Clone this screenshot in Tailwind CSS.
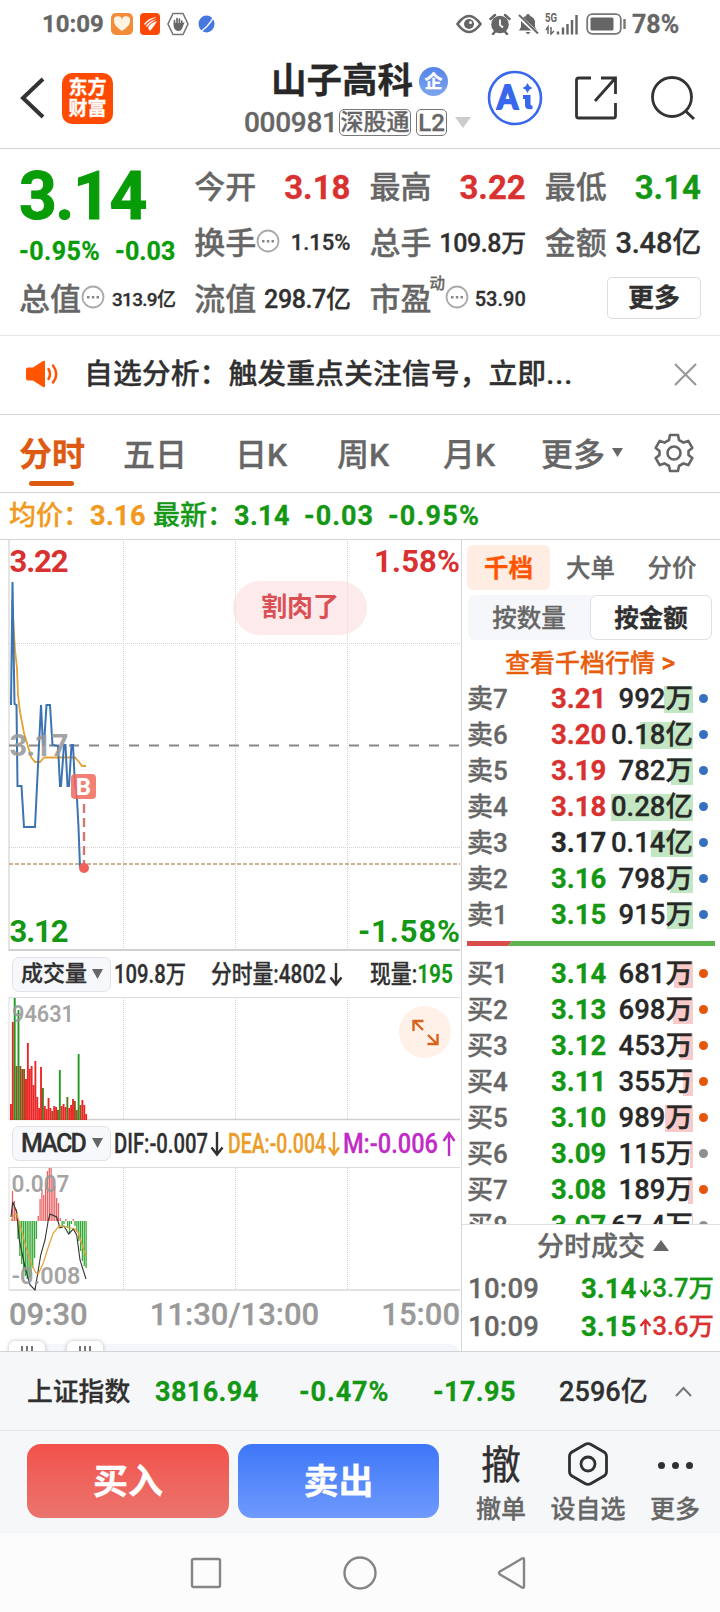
<!DOCTYPE html>
<html lang="zh-CN">
<head>
    <meta charset="UTF-8">
    <meta name="viewport" content="width=device-width, initial-scale=1.0">
    <title>山子高科 000981</title>
    <script src="https://cdn.jsdelivr.net/npm/@tailwindcss/browser@4"></script>
</head>
<body class="w-[720px] h-[1612px] overflow-hidden bg-white text-[#303030] font-['Roboto','Noto_Sans_CJK_SC',sans-serif] font-medium leading-none whitespace-nowrap [-webkit-text-stroke:0.3px]">

    <!-- Status bar -->
    <div class="h-12 flex items-center justify-between pl-[42px] pr-[38px] text-[#666]">
        <div class="flex items-center">
            <span class="w-[69px] text-[24px] font-bold">10:09</span>
            <svg class="w-[22px] h-[22px] mr-[7px]" viewBox="0 0 22 22"><rect width="22" height="22" rx="5" fill="#f28c38"/><path d="M11 18C5 14 3 11 3 8a4 4 0 0 1 8-1.500a4 4 0 0 1 8 1.500c0 3-2 6-8 10z" fill="#fff3e2"/></svg>
            <svg class="w-5 h-[22px] mr-[7px]" viewBox="0 0 20 22"><rect width="20" height="22" rx="4" fill="#fb4707"/><path d="M4 11Q8 5 17 4Q9 7 5 12zM6 13Q9 8 17 6Q11 9 7 14zM8 15Q10 10 17 8Q15 12 10 18z" fill="#fff"/></svg>
            <svg class="w-[22px] h-[24px] mr-[9px]" viewBox="0 0 22 24"><path d="M6 1.500h10l5 10.500-5 10.500H6L1 12z" fill="none" stroke="#777" stroke-width="1.600"/><path d="M7.500 12V8.500m2.500 4V6.500m2.400 6V7m2.400 6V9" stroke="#666" stroke-width="1.700" stroke-linecap="round"/><path d="M6.700 11h9l2-1-2.400 6q-1 3-4 3t-4.600-4z" fill="#666"/></svg>
            <svg class="w-[17px] h-[24px]" viewBox="0 0 17 24"><ellipse cx="8.500" cy="12" rx="8" ry="8.500" fill="#4678e0"/><path d="M0 21Q9 17 17 3" stroke="#fff" stroke-width="1.500" fill="none"/></svg>
        </div>
        <div class="flex items-center">
            <svg class="w-[26px] h-[20px] mr-[7px]" viewBox="0 0 26 20"><path d="M1.500 10Q13-6 24.500 10Q13 26 1.500 10z" fill="none" stroke="#666" stroke-width="2.600"/><circle cx="13" cy="10" r="5" fill="#666"/><circle cx="14.500" cy="8.500" r="1.500" fill="#fff"/></svg>
            <svg class="w-[22px] h-[22px] mr-[6px]" viewBox="0 0 22 22"><circle cx="11" cy="11.500" r="8.800" fill="#666"/><path d="M1.500 6L6 2M20.500 6L16 2M4 21l2.500-3M18 21l-2.500-3" stroke="#666" stroke-width="2.500" stroke-linecap="round"/><path d="M11 6.500V12l3 2.500" fill="none" stroke="#fff" stroke-width="1.800"/></svg>
            <svg class="w-[22px] h-[22px] mr-[6px]" viewBox="0 0 22 22"><path d="M11 1a2 2 0 0 1 2 2q5 1.500 5 7v4l2 3.500H2L4 14v-4q0-5.500 5-7a2 2 0 0 1 2-2zM8.500 19h5l-2.500 2.500z" fill="#666"/><path d="M1 2.500L21 21" stroke="#fff" stroke-width="4"/><path d="M2 2L21 20.500" stroke="#666" stroke-width="1.800"/></svg>
            <svg class="w-[34px] h-[24px] mr-[7px]" viewBox="0 0 34 24"><text x="0" y="10" font-size="12.500" font-weight="700" fill="#666" textLength="12" lengthAdjust="spacingAndGlyphs">5G</text><path d="M3 22v-7l-2 3m5-3v7l3-3" stroke="#666" stroke-width="1.500" fill="none"/><path d="M13 22.500v-3M18 22.500v-7M22.500 22.500V12M27 22.500V8M31.500 22.500V3" stroke="#666" stroke-width="2.400"/></svg>
            <svg class="w-[41px] h-[22px] mr-[5px]" viewBox="0 0 41 22"><rect x="1.200" y="1.200" width="33.600" height="19.600" rx="5" fill="none" stroke="#777" stroke-width="1.800"/><rect x="4.500" y="4.500" width="23" height="13" rx="1.500" fill="#666"/><path d="M38.500 6v10" stroke="#777" stroke-width="2.400"/></svg>
            <span class="w-[50px] text-[25px] font-bold">78%</span>
        </div>
    </div>

    <!-- Header -->
    <header class="h-[101px] flex items-center border-b border-[#d6d6d6] pl-5">
        <svg class="w-[25px] h-[42px] mr-[17px]" viewBox="0 0 25 42"><path d="M23 2L3 21l20 19" fill="none" stroke="#333" stroke-width="4"/></svg>
        <div class="w-[51px] h-[51px] rounded-[10px] bg-[#ff4a00] text-white text-[19px] font-bold leading-[21px] flex flex-col items-center justify-center"><span>东方</span><span>财富</span></div>
        <div class="w-[240px] ml-[127px] pt-[5px] flex flex-col">
            <div class="flex items-center h-[44px] pl-[31px]">
                <h1 class="text-[35.500px] font-bold text-[#282828]">山子高科</h1>
                <div class="w-[29px] h-[29px] ml-[6px] rounded-full bg-linear-to-b from-[#5684e8] to-[#7fa5ef] text-white text-[18px] font-bold flex items-center justify-center">企</div>
            </div>
            <div class="flex items-center h-[38px] pl-1 text-[#666]">
                <span class="w-[95px] text-[28px] tracking-[-0.300px]">000981</span>
                <span class="w-[72px] h-[27px] border border-[#777] rounded-[5px] text-[23px] flex items-center justify-center">深股通</span>
                <span class="w-[31px] h-[27px] ml-[5px] border border-[#777] rounded-[5px] text-[24px] flex items-center justify-center">L2</span>
                <svg class="w-[16px] h-[11px] ml-2" viewBox="0 0 16 11"><path d="M0 0h16L8 11z" fill="#ccc"/></svg>
            </div>
        </div>
        <svg class="w-[56px] h-[56px] ml-[7px]" viewBox="0 0 56 56"><circle cx="28" cy="28" r="26" fill="none" stroke="#3867ed" stroke-width="2.600"/><text x="10" y="38.500" font-size="33" font-weight="900" fill="#3867ed" stroke="#3867ed" stroke-width="1.800" font-family="Lato" textLength="21" lengthAdjust="spacingAndGlyphs">A</text><path d="M36 25h7.500v9q0 2 2 1.500v3.500q-7.500 1.500-7.500-4v-6h-2z" fill="#3867ed"/><path d="M40.500 13l1.800 3.200L45.500 18l-3.200 1.800L40.500 23l-1.800-3.200L35.500 18l3.200-1.800z" fill="#3867ed"/></svg>
        <svg class="w-[46px] h-[46px] ml-[30px]" viewBox="0 0 46 46"><path d="M18 3H5.500q-2 0-2 2v36q0 2 2 2h35q2 0 2-2V28M28 3h14.500v16M42.500 3L22 26" fill="none" stroke="#333" stroke-width="2.800"/></svg>
        <svg class="w-[46px] h-[46px] ml-[31px]" viewBox="0 0 46 46"><circle cx="22" cy="22" r="19.500" fill="none" stroke="#333" stroke-width="2.800"/><path d="M35.500 36l8.500 8" stroke="#333" stroke-width="3"/></svg>
    </header>

    <!-- Quote -->
    <section class="h-[187px] pt-[10px] px-[19px] border-b border-[#e8e8e8] grid grid-cols-4 gap-x-[19px] grid-rows-[56px_56px_56px] text-[31px] text-[#666]">
        <div class="row-span-2 flex flex-col text-[#089c08]">
            <div class="h-[75px] flex items-center text-[66px] font-bold tracking-[-1.500px] [-webkit-text-stroke:1px]">3.14</div>
            <div class="h-[34px] flex items-center justify-between text-[25px] font-bold"><span class="tracking-[0.400px]">-0.95%</span><span>-0.03</span></div>
        </div>
        <div class="flex items-center justify-between"><span>今开</span><span class="text-[33px] font-bold text-[#d93030]">3.18</span></div>
        <div class="flex items-center justify-between"><span>最高</span><span class="text-[33px] font-bold text-[#d93030]">3.22</span></div>
        <div class="flex items-center justify-between"><span>最低</span><span class="text-[33px] font-bold text-[#149714]">3.14</span></div>
        <div class="flex items-center"><span>换手</span>
            <svg class="w-[24px] h-[24px] mb-1" viewBox="0 0 24 24"><circle cx="12" cy="12" r="10.500" fill="none" stroke="#aaa" stroke-width="1.800"/><path d="M6 11h2.500v2.500H6zM10.800 11h2.500v2.500h-2.500zM15.500 11H18v2.500h-2.500z" fill="#888"/></svg>
            <span class="ml-auto text-[22px] text-[#303030]">1.15%</span></div>
        <div class="flex items-center justify-between"><span>总手</span><span class="text-[25px] text-[#303030] tracking-[-0.400px]">109.8万</span></div>
        <div class="flex items-center justify-between"><span>金额</span><span class="text-[29px] text-[#303030] tracking-[-0.200px]">3.48亿</span></div>
        <div class="flex items-center"><span>总值</span>
            <svg class="w-[24px] h-[24px] mb-1" viewBox="0 0 24 24"><circle cx="12" cy="12" r="10.500" fill="none" stroke="#aaa" stroke-width="1.800"/><path d="M6 11h2.500v2.500H6zM10.800 11h2.500v2.500h-2.500zM15.500 11H18v2.500h-2.500z" fill="#888"/></svg>
            <span class="ml-auto text-[19px] text-[#303030] tracking-[-0.700px]">313.9亿</span></div>
        <div class="flex items-center justify-between"><span>流值</span><span class="text-[25px] text-[#303030] tracking-[-0.400px]">298.7亿</span></div>
        <div class="flex items-center"><span class="w-[60px]">市盈</span><span class="w-[15px] text-[15.500px] self-start mt-[6px]">动</span>
            <svg class="w-[24px] h-[24px] mb-1" viewBox="0 0 24 24"><circle cx="12" cy="12" r="10.500" fill="none" stroke="#aaa" stroke-width="1.800"/><path d="M6 11h2.500v2.500H6zM10.800 11h2.500v2.500h-2.500zM15.500 11H18v2.500h-2.500z" fill="#888"/></svg>
            <span class="ml-auto text-[20px] text-[#303030]">53.90</span></div>
        <div class="flex items-center justify-end"><button class="w-[94px] h-[42px] mb-[3px] border border-[#ddd] rounded-[5px] text-[26px] font-bold text-[#303030]">更多</button></div>
    </section>

    <!-- Notice -->
    <section class="h-[79px] flex items-center pl-[25px] pr-[23px] pb-[2px] border-b border-[#d6d6d6]">
        <svg class="w-[34px] h-[28px]" viewBox="0 0 34 28"><path d="M1 9.500q0-2 2-2h5L18 1q2-1 2 1v24q0 2-2 1L8 20.500H3q-2 0-2-2z" fill="#ff5500"/><path d="M23.500 9q3 5 0 10M28 5.500q6.500 8.500 0 17" fill="none" stroke="#ff5500" stroke-width="2.500" stroke-linecap="round"/></svg>
        <span class="ml-[25px] text-[28.900px]">自选分析：触发重点关注信号，立即<span class="tracking-[1px]">...</span></span>
        <svg class="w-[23px] h-[23px] ml-auto" viewBox="0 0 23 23"><path d="M1 1l21 21M22 1L1 22" stroke="#999" stroke-width="2.200"/></svg>
    </section>

    <!-- Period tabs -->
    <nav class="relative h-[78px] border-b border-[#d6d6d6] pl-[19px] pr-[26px] pt-[2px] flex items-center text-[32px] text-[#666]">
        <span class="w-[104px] text-[33px] font-bold text-[#dd5a12]">分时</span>
        <span class="w-[112px]">五日</span>
        <span class="w-[102px]">日K</span>
        <span class="w-[106px]">周K</span>
        <span class="w-[98px]">月K</span>
        <span>更多</span>
        <svg class="w-[11px] h-[9px] ml-[7px] mb-[4px]" viewBox="0 0 11 9"><path d="M0 0h11L5.500 9z" fill="#666"/></svg>
        <svg class="w-[40px] h-[40px] ml-auto mb-[3px]" viewBox="0 0 40 40" fill="none" stroke="#666" stroke-width="2.600" stroke-linejoin="round"><path d="M16 2h8l1 5 4.500 2.600 4.800-1.700 4 7L34.500 18v4l3.800 3.100-4 7-4.800-1.700L25 33l-1 5h-8l-1-5-4.500-2.600-4.800 1.700-4-7L5.500 22v-4l-3.800-3.100 4-7 4.800 1.700L15 7z"/><circle cx="20" cy="20" r="6.500"/></svg>
        <span class="absolute left-[29px] bottom-[6px] w-[45px] h-[5px] rounded-full bg-[#dd5a12]"></span>
    </nav>

    <div class="h-[47px] flex items-center pl-[9px] border-b border-[#d6d6d6] text-[27px] text-[#149714]">
        <span class="w-[81px] text-[#f09a22]">均价：</span><span class="w-[63px] text-[#f09a22] font-bold tracking-[0.400px]">3.16</span>
        <span class="w-[81px]">最新：</span><span class="w-[70px] font-bold tracking-[0.400px]">3.14</span>
        <span class="w-[84px] font-bold tracking-[1px]">-0.03</span><span class="font-bold tracking-[1.200px]">-0.95%</span>
    </div>

    <main class="h-[812px] flex border-b border-[#d0d3d8]">
        <!-- Charts -->
        <div class="w-[462px] border-r border-[#d6d6d6] flex flex-col overflow-hidden">
            <svg class="w-[461px] h-[411px] shrink-0" viewBox="0 540 461 411" font-weight="700" font-size="31">
                <path d="M9 540v411" stroke="#ddd" stroke-width="1.500"/>
                <path d="M9 950h451" stroke="#d0d0d0" stroke-width="2"/>
                <path d="M123.500 541v409M235.500 541v409M347.500 541v409M9 643.500h451M9 847.500h451" stroke="#d2d2d2" stroke-dasharray="1 1"/>
                <path d="M9 745.500h451" stroke="#888" stroke-width="2" stroke-dasharray="10 10"/>
                <path d="M9 864h451" stroke="#c09a78" stroke-width="1.600" stroke-dasharray="4 2"/>
                <polyline fill="none" stroke="#e6a034" stroke-width="1.800" points="12,600 15,650 17,668 18,695 20,712 24,733 29,750 31,757 35,762 40,762 44,757.500 75,757.500 79,762 82,766 86,766"/>
                <polyline fill="none" stroke="#3b74b0" stroke-width="2" points="11,705 12.500,582 14.500,704 16.500,705 17.500,786 21.500,786 24,827 35,827 37,786 41,705 43,745 44,745 46.500,705 50,705 52.500,745 58,746 60,786 61,786 64,745 65.500,745 67.500,786 69,786 71.500,745 73,745 75,786 76.500,790 78.500,827 80,867 84,868"/>
                <path d="M84 804v60" stroke="#cf7b75" stroke-width="2.400" stroke-dasharray="9 5"/>
                <circle cx="84" cy="868" r="5" fill="#f0605a"/>
                <rect x="71" y="774" width="25" height="25" rx="4" fill="#f06a5c" fill-opacity=".85"/>
                <text x="83.500" y="795" font-size="24" fill="#fff" text-anchor="middle">B</text>
                <rect x="233" y="581" width="134" height="54" rx="27" fill="#fbdcdc" fill-opacity=".6"/>
                <text x="261" y="616" font-size="26" fill="#d95055" textLength="78">割肉了</text>
                <text x="9.500" y="572" fill="#d93030" textLength="59">3.22</text>
                <text x="374" y="572" fill="#d93030" textLength="86">1.58%</text>
                <text x="9.500" y="756" fill="#999" fill-opacity=".9" textLength="59">3.17</text>
                <text x="9.500" y="942" fill="#149714" textLength="59">3.12</text>
                <text x="358" y="942" fill="#149714" textLength="102">-1.58%</text>
            </svg>

            <div class="h-[46px] shrink-0 flex items-center pl-3 text-[24px]">
                <div class="w-[99px] h-[35px] mr-1 shrink-0 bg-[#f7f8fb] border border-[#e2e3e6] rounded-[7px] flex items-center justify-between pl-2 pr-[7px] text-[22px]">成交量<svg class="w-[11px] h-[10px]" viewBox="0 0 11 10"><path d="M0 0h11L5.500 10z" fill="#666"/></svg></div>
                <svg class="w-[345px] h-[34px]" viewBox="115 957 345 34" font-size="25" fill="#303030">
                    <text x="114" y="983" textLength="72" lengthAdjust="spacingAndGlyphs" stroke="#303030" stroke-width=".3">109.8万</text>
                    <text x="211" y="983" textLength="115" lengthAdjust="spacingAndGlyphs" stroke="#303030" stroke-width=".3">分时量:4802</text>
                    <path d="M336 963v21m-5.500-6.500l5.500 7 5.500-7" fill="none" stroke="#303030" stroke-width="2.400"/>
                    <text x="370" y="983" stroke="#303030" stroke-width=".3" textLength="83" lengthAdjust="spacingAndGlyphs">现量:<tspan font-weight="700" fill="#149714" stroke="none">195</tspan></text>
                </svg>
            </div>

            <svg class="w-[461px] h-[124px] shrink-0" viewBox="0 997 461 124">
                <path d="M9 997.500h451M9 997v123" stroke="#ddd" fill="none"/>
                <path d="M9 1119.500h451" stroke="#d0d0d0" stroke-width="1.500"/>
                <path d="M123.500 998v122M235.500 998v122M347.500 998v122" stroke="#d2d2d2" stroke-dasharray="1 1"/>
                <g id="volume-bars"></g>
                <text x="12" y="1021.500" font-size="23" font-weight="600" fill="#999" fill-opacity=".9" textLength="62" lengthAdjust="spacingAndGlyphs">94631</text>
                <circle cx="425" cy="1032" r="26" fill="#fff0e8"/>
                <path d="M413.500 1031v-10h10M414 1021l9 9M437.500 1034v10h-10M437 1044l-9-9" fill="none" stroke="#d8631e" stroke-width="2.400"/>
            </svg>

            <div class="h-[46px] shrink-0 flex items-center pl-3 pb-[2px]">
                <div class="w-[99px] h-[35px] mr-1 shrink-0 bg-[#f7f8fb] border border-[#e2e3e6] rounded-[7px] flex items-center justify-between pl-2 pr-[7px] text-[25px] tracking-[-1.800px]">MACD<svg class="w-[11px] h-[10px]" viewBox="0 0 11 10"><path d="M0 0h11L5.500 10z" fill="#666"/></svg></div>
                <svg class="w-[345px] h-[34px]" viewBox="115 1126 345 34" font-size="28">
                    <text x="114" y="1153" fill="#303030" stroke="#303030" stroke-width=".3" textLength="94" lengthAdjust="spacingAndGlyphs">DIF:-0.007</text>
                    <path d="M217 1132v22m-5.500-6.500l5.500 7 5.500-7" fill="none" stroke="#303030" stroke-width="2.400"/>
                    <text x="228" y="1153" fill="#ec9c28" stroke="#ec9c28" stroke-width=".3" textLength="98" lengthAdjust="spacingAndGlyphs">DEA:-0.004</text>
                    <path d="M334 1132v22m-5-6.500l5 7 5-7" fill="none" stroke="#ec9c28" stroke-width="2.400"/>
                    <text x="343" y="1153" fill="#c02cc6" stroke="#c02cc6" stroke-width=".3" textLength="95" lengthAdjust="spacingAndGlyphs">M:-0.006</text>
                    <path d="M449 1156v-22m-5.500 7l5.500-8 5.500 8" fill="none" stroke="#c02cc6" stroke-width="2.400"/>
                </svg>
            </div>

            <svg class="w-[461px] h-[124px] shrink-0" viewBox="0 1167 461 124">
                <path d="M9 1167.500h451M9 1167v123" stroke="#ddd" fill="none"/>
                <path d="M9 1290h451" stroke="#d8d8d8" stroke-width="1.500"/>
                <path d="M123.500 1168v122M235.500 1168v122M347.500 1168v122" stroke="#d2d2d2" stroke-dasharray="1 1"/>
                <g id="macd-bars"></g>
                <polyline fill="none" stroke="#333" stroke-width="1.100" points="11,1217 12.700,1202 16.700,1212 19.300,1240 25,1267 30,1285 35,1290 38.300,1270 40.700,1255 45,1240 48.300,1220 50,1214 56.700,1217 60,1228 64,1226 68.700,1234 73.300,1229 76.700,1235 80,1260 86,1279"/>
                <polyline fill="none" stroke="#e6a034" stroke-width="1.200" points="11,1221 14,1215 16.700,1214 20.700,1227 26,1247 31.700,1265 36,1273 38.300,1274 43.300,1263 48.300,1247 53.300,1233 59.300,1226 66.700,1227 75,1229 78.300,1233 82.700,1247 86,1256"/>
                <text x="11.500" y="1192" font-size="23" font-weight="600" fill="#999" fill-opacity=".9" textLength="58" lengthAdjust="spacingAndGlyphs">0.007</text>
                <text x="11.500" y="1284" font-size="23" font-weight="600" fill="#999" fill-opacity=".9" textLength="69" lengthAdjust="spacingAndGlyphs">-0.008</text>
            </svg>

            <div class="h-[47px] shrink-0 flex items-center justify-between pl-[9px] pr-px text-[31px] text-[#999]">
                <span>09:30</span><span>11:30/13:00</span><span>15:00</span>
            </div>
            <div class="mx-[9px] mr-[2px] mt-[6px] h-[20px] shrink-0 bg-[#f5f6f9] rounded-t-lg flex gap-[22px]">
                <div class="w-[36px] h-[20px] -mt-[3px] rounded-[6px] bg-white shadow-[0_0_4px_rgba(0,0,0,0.250)] flex justify-center gap-[3px] pt-[5px]"><i class="w-[2px] h-3 bg-[#777]"></i><i class="w-[2px] h-3 bg-[#777]"></i><i class="w-[2px] h-3 bg-[#777]"></i></div>
                <div class="w-[36px] h-[20px] -mt-[3px] rounded-[6px] bg-white shadow-[0_0_4px_rgba(0,0,0,0.250)] flex justify-center gap-[3px] pt-[5px]"><i class="w-[2px] h-3 bg-[#777]"></i><i class="w-[2px] h-3 bg-[#777]"></i><i class="w-[2px] h-3 bg-[#777]"></i></div>
            </div>
        </div>

        <!-- Order book -->
        <aside class="w-[258px] flex flex-col">
            <div class="h-[45px] mt-[5px] pl-[5px] shrink-0 flex text-[24.500px] text-[#666]">
                <span class="w-[83px] pt-[3px] rounded-[6px] bg-[#ffede4] text-[#ff5500] font-bold flex items-center justify-center">千档</span>
                <span class="w-[81px] pt-[3px] flex items-center justify-center">大单</span>
                <span class="w-[82px] pt-[3px] flex items-center justify-center">分价</span>
            </div>
            <div class="h-[45px] mt-[5px] ml-[6px] w-[244px] shrink-0 rounded-[7px] bg-[#f6f7fa] flex text-[24.500px] text-[#666]">
                <span class="w-[122px] pt-[3px] flex items-center justify-center">按数量</span>
                <span class="w-[122px] pt-[3px] rounded-[7px] border border-[#e0e0e2] bg-white text-[#303030] font-bold flex items-center justify-center">按金额</span>
            </div>
            <div class="h-[41px] shrink-0 pl-[43px] pt-[5px] flex items-center text-[25px] text-[#e85c0c]">查看千档行情&nbsp;<span class="tracking-normal text-[27px]">&gt;</span></div>
            <div id="sell-rows" class="shrink-0"></div>
            <svg class="w-[248px] h-[5px] mt-[8px] ml-[5px] mb-[10px] shrink-0" viewBox="0 0 248 5"><path d="M0 0h45l-4 5H0z" fill="#d84c4c"/><path d="M45 0h203v5H41z" fill="#5fb34e"/></svg>
            <div id="buy-rows" class="h-[269px] shrink-0 overflow-hidden border-b border-[#e0e0e0]"></div>
            <div class="h-[44px] shrink-0 flex items-center pl-[75px] pt-px text-[27px] text-[#666]">分时成交<svg class="w-[16px] h-[11px] ml-2 mb-1" viewBox="0 0 16 11"><path d="M0 11h16L8 0z" fill="#666"/></svg></div>
            <div class="h-[38px] shrink-0 flex items-center pl-[6px] pr-[6px] pt-px text-[27.500px]">
                <span class="w-[113px] tracking-[0.300px] text-[#666]">10:09</span><span class="w-[58px] font-bold text-[#149714]">3.14</span>
                <svg class="w-[13px] h-[18px]" viewBox="0 0 13 18"><path d="M6.500 1v15m-5-6l5 6 5-6" fill="none" stroke="#149714" stroke-width="2.400"/></svg>
                <span class="ml-auto text-[25.500px] text-[#149714]">3.7万</span>
            </div>
            <div class="h-[38px] shrink-0 flex items-center pl-[6px] pr-[6px] pt-px text-[27.500px]">
                <span class="w-[113px] tracking-[0.300px] text-[#666]">10:09</span><span class="w-[58px] font-bold text-[#149714]">3.15</span>
                <svg class="w-[13px] h-[18px]" viewBox="0 0 13 18"><path d="M6.500 17V2m-5 6l5-6 5 6" fill="none" stroke="#d93030" stroke-width="2.400"/></svg>
                <span class="ml-auto text-[25.500px] text-[#d93030]">3.6万</span>
            </div>
        </aside>
    </main>

    <!-- Index bar -->
    <div class="h-[79px] bg-[#f6f7f9] border-b border-[#e3e5e8] flex items-center pt-[3px] pl-[27px] pr-[28px] text-[25.800px]">
        <span class="w-[128px]">上证指数</span>
        <span class="w-[144px] text-[27px] tracking-[0.400px] font-bold text-[#149714]">3816.94</span>
        <span class="w-[134px] text-[27px] tracking-[0.900px] font-bold text-[#149714]">-0.47%</span>
        <span class="w-[126px] text-[27px] tracking-[0.400px] font-bold text-[#149714]">-17.95</span>
        <span class="text-[27px] tracking-[0.100px]">2596亿</span>
        <svg class="w-[17px] h-[11px] ml-auto mb-[3px]" viewBox="0 0 17 11"><path d="M1 10l7.500-8L16 10" fill="none" stroke="#777" stroke-width="2"/></svg>
    </div>

    <!-- Trade actions -->
    <div class="h-[102px] bg-[#f6f7f9] flex pl-[27px] text-[25px] text-[#666]">
        <button class="w-[202px] h-[74px] mt-[13px] pt-[3px] rounded-[14px] bg-linear-to-b from-[#f2514a] to-[#ea746e] text-white text-[35px] font-bold">买入</button>
        <button class="w-[201px] h-[74px] mt-[13px] ml-[9px] pt-[3px] rounded-[14px] bg-linear-to-b from-[#3d76f7] to-[#6f9afe] text-white text-[35px] font-bold">卖出</button>
        <div class="w-[80px] ml-[22px] flex flex-col items-center">
            <span class="h-[66px] pt-[3px] flex items-center text-[40px] text-[#303030] font-normal">撤</span><span>撤单</span>
        </div>
        <div class="w-[80px] ml-[7px] flex flex-col items-center">
            <span class="h-[66px] flex items-center"><svg class="w-[40px] h-[44px]" viewBox="0 0 40 44" fill="none" stroke="#303030" stroke-width="2.800"><path d="M17 2.500q3-1.800 6 0l13 7.500q2.500 1.500 2.500 4.500v15q0 3-2.500 4.500L23 41.500q-3 1.800-6 0L4 34q-2.500-1.500-2.500-4.500v-15Q1.500 11.500 4 10z"/><circle cx="20" cy="22" r="7"/></svg></span><span>设自选</span>
        </div>
        <div class="w-[80px] ml-[7px] flex flex-col items-center">
            <span class="h-[66px] pt-[2px] flex items-center gap-[7px]"><i class="w-[7px] h-[7px] rounded-full bg-[#303030]"></i><i class="w-[7px] h-[7px] rounded-full bg-[#303030]"></i><i class="w-[7px] h-[7px] rounded-full bg-[#303030]"></i></span><span>更多</span>
        </div>
    </div>

    <!-- System navigation -->
    <div class="h-[79px] bg-[#fcfcfc] flex items-center pl-[190px]">
        <svg class="w-[32px] h-[32px]" viewBox="0 0 32 32"><rect x="2" y="2" width="28" height="28" rx="1.500" fill="none" stroke="#858585" stroke-width="2.400"/></svg>
        <svg class="w-[34px] h-[34px] ml-[121px]" viewBox="0 0 34 34"><circle cx="17" cy="17" r="15.500" fill="none" stroke="#858585" stroke-width="2.400"/></svg>
        <svg class="w-[30px] h-[34px] ml-[120px]" viewBox="0 0 30 34"><path d="M27 3.500v27q0 2-2 1L3 18.500q-2-1.500 0-3L25 2.500q2-1 2 1z" fill="none" stroke="#858585" stroke-width="2.400"/></svg>
    </div>

    <script>
        const RED = 'text-[#d93030]', GREEN = 'text-[#149714]', BLACK = 'text-[#282828]';
        const BLUE_DOT = 'bg-[#3470bd]', ORANGE_DOT = 'bg-[#e5560c]', GRAY_DOT = 'bg-[#8e8e93]';

        // label, price, price colour, amount, bar width, dot colour
        const sells = [
            ['卖7', '3.21', RED, '992万', 29, BLUE_DOT],
            ['卖6', '3.20', RED, '0.18亿', 53, BLUE_DOT],
            ['卖5', '3.19', RED, '782万', 22, BLUE_DOT],
            ['卖4', '3.18', RED, '0.28亿', 82, BLUE_DOT],
            ['卖3', '3.17', BLACK, '0.14亿', 42, BLUE_DOT],
            ['卖2', '3.16', GREEN, '798万', 23, BLUE_DOT],
            ['卖1', '3.15', GREEN, '915万', 26, BLUE_DOT]
        ];
        const buys = [
            ['买1', '3.14', GREEN, '681万', 19, ORANGE_DOT],
            ['买2', '3.13', GREEN, '698万', 20, ORANGE_DOT],
            ['买3', '3.12', GREEN, '453万', 13, ORANGE_DOT],
            ['买4', '3.11', GREEN, '355万', 10, ORANGE_DOT],
            ['买5', '3.10', GREEN, '989万', 28, ORANGE_DOT],
            ['买6', '3.09', GREEN, '115万', 3, GRAY_DOT],
            ['买7', '3.08', GREEN, '189万', 5, ORANGE_DOT],
            ['买8', '3.07', GREEN, '67.4万', 1, GRAY_DOT]
        ];

        function renderRows(id, rows, barColor) {
            document.getElementById(id).innerHTML = rows.map(([label, price, color, amount, bar, dot]) => `
                <div class="h-9 flex items-center pl-[5px]">
                    <span class="w-[84px] text-[26px] text-[#666]">${label}</span>
                    <span class="w-[60px] text-[27.500px] font-bold ${color}">${price}</span>
                    <span class="relative w-[82px] h-[27px] flex items-center justify-end">
                        <span class="absolute right-0 top-0 h-[27px] ${barColor}" style="width:${bar}px"></span>
                        <span class="relative text-[27.500px] text-[#282828]">${amount}</span>
                    </span>
                    <span class="w-[9px] h-[9px] ml-[6px] mb-[2px] rounded-full ${dot}"></span>
                </div>`).join('');
        }
        renderRows('sell-rows', sells, 'bg-[#c3e6c3]');
        renderRows('buy-rows', buys, 'bg-[#f8caca]');

        // Volume: height and colour for each minute
        const R = '#ee2525', G = '#1f9a1f', M = '#93501a';
        const volume = [
            [16, R], [98, R], [122, G], [54, M], [110, G], [54, M], [51, M], [51, M], [41, R], [77, R],
            [51, R], [54, R], [35, R], [59, R], [23, R], [12, R], [53, R], [32, '#4f7a1a'], [14, R], [11, R],
            [22, R], [12, R], [9, M], [14, R], [13, R], [10, M], [50, G], [14, R], [16, R], [13, R],
            [23, '#4f7a1a'], [12, R], [15, R], [21, R], [19, M], [10, M], [66, G], [15, M], [20, R], [15, R], [6, R]
        ];
        document.getElementById('volume-bars').innerHTML = volume.map(([h, c], i) =>
            `<rect x="${10 + i * 1.88}" y="${1120 - h}" width="1.880" height="${h}" fill="${c}"/>`).join('');

        const macd = [0, 30, 20, 12, -18, -35, -43, -50, -55, -58, -57, -55, -47, -37, -18, 5, 22, 32, 26, 38, 50,
            53, 53, 42, 35, 23, 18, 3, -7, -3, 2, -7, -13, -3, 2, -5, -10, -20, -30, -40, -45, -47];
        document.getElementById('macd-bars').innerHTML = macd.map((v, i) =>
            `<rect x="${10 + i * 1.84}" y="${v > 0 ? 1221 - v : 1221}" width="1.300" height="${Math.abs(v)}" fill="${v > 0 ? '#ea6464' : '#35a935'}"/>`).join('');
    </script>
</body>
</html>
